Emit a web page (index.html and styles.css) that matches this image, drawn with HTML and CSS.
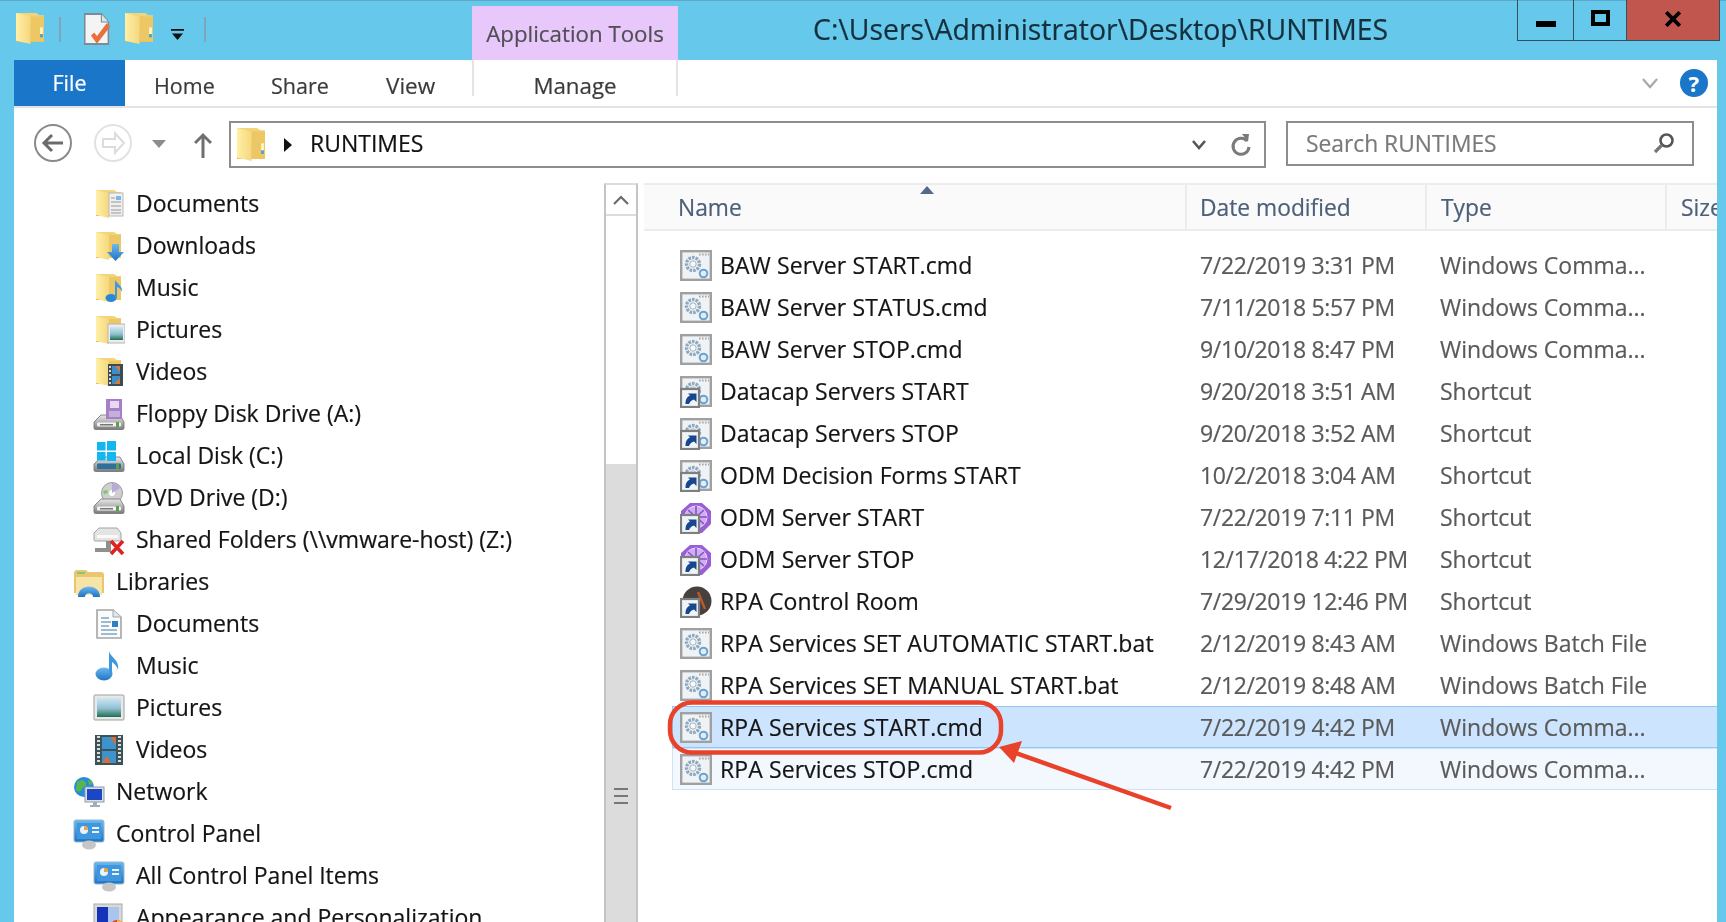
FILE: index.html
```html
<!DOCTYPE html>
<html lang="en">
<head>
<meta charset="utf-8">
<title>RUNTIMES</title>
<link rel="stylesheet" href="styles.css">
</head>
<body>
<svg class="defs" width="0" height="0" aria-hidden="true">
  <defs>
    <linearGradient id="gFolderFront" x1="0" y1="0" x2="1" y2="0"><stop offset="0" stop-color="#fff0a6"/><stop offset="1" stop-color="#f5d77e"/></linearGradient>
    <linearGradient id="gFolderBack" x1="0" y1="0" x2="0" y2="1"><stop offset="0" stop-color="#f6d57a"/><stop offset="1" stop-color="#e0b04e"/></linearGradient>
    <linearGradient id="gDrive" x1="0" y1="0" x2="0" y2="1"><stop offset="0" stop-color="#e8e8e8"/><stop offset="1" stop-color="#7b7b7b"/></linearGradient>
    <linearGradient id="gBlue" x1="0" y1="0" x2="0" y2="1"><stop offset="0" stop-color="#6cb8ee"/><stop offset="1" stop-color="#1f74c4"/></linearGradient>
    <linearGradient id="gScene" x1="0" y1="0" x2="0" y2="1"><stop offset="0" stop-color="#cfe6f4"/><stop offset=".55" stop-color="#8fc0d0"/><stop offset="1" stop-color="#1f6f50"/></linearGradient>

    <symbol id="folder" viewBox="0 0 32 32">
      <path d="M3 2h18l3 2h4v24H3z" fill="url(#gFolderBack)"/>
      <path d="M16 5h12v23H16z" fill="#eec765"/>
      <path d="M3 2l13 3v25L3 27z" fill="url(#gFolderFront)"/>
    </symbol>
    <symbol id="folderQat" viewBox="3 2 25 28" preserveAspectRatio="none">
      <path d="M3 2h18l3 2h4v24H3z" fill="url(#gFolderBack)"/>
      <path d="M16 5h12v23H16z" fill="#eec765"/>
      <path d="M3 2l13 3v25L3 27z" fill="url(#gFolderFront)"/>
      <rect x="24.500" y="15" width="2.500" height="6" fill="#fff6d0"/>
      <rect x="24.500" y="21" width="2.500" height="3" fill="#4aa3c8"/>
    </symbol>
    <symbol id="propdoc" viewBox="0 0 32 32" preserveAspectRatio="none">
      <path d="M2 1h19l8 8v22H2z" fill="#f4f4f4" stroke="#7d8b96" stroke-width="1.800"/>
      <path d="M21 1v8h8" fill="#dfe3e6" stroke="#7d8b96" stroke-width="1.200"/>
      <path d="M11 21l5 6 13-15" fill="none" stroke="#e8703c" stroke-width="5"/>
    </symbol>
    <symbol id="fDocs" viewBox="0 0 32 32">
      <use href="#folder"/>
      <rect x="16" y="5" width="14" height="23" fill="#efefef" stroke="#b9b9b9"/>
      <path d="M18 10h4M18 14h10M18 18h10M18 22h10M18 25h10" stroke="#9a9a9a" stroke-width="1.200"/>
      <rect x="23" y="8" width="5" height="4" fill="#7cb6e6"/>
    </symbol>
    <symbol id="fDown" viewBox="0 0 32 32">
      <use href="#folder"/>
      <path d="M19 14h7v8h5l-8.500 9-8.500-9h5z" fill="url(#gBlue)"/>
    </symbol>
    <symbol id="fMusic" viewBox="0 0 32 32">
      <use href="#folder"/>
      <ellipse cx="18" cy="26" rx="5.500" ry="4" fill="#2a86d6"/>
      <path d="M22 26V7c0 4 8 6 7 13-1-4-5-5-5-5v11z" fill="#3d98e0"/>
    </symbol>
    <symbol id="fPics" viewBox="0 0 32 32">
      <use href="#folder"/>
      <rect x="15" y="10" width="17" height="19" fill="#ececec" stroke="#b5b5b5"/>
      <rect x="17" y="13" width="13" height="13" fill="url(#gScene)"/>
    </symbol>
    <symbol id="fVids" viewBox="0 0 32 32">
      <use href="#folder"/>
      <rect x="15" y="8" width="15" height="22" fill="#3a4d55"/>
      <rect x="19" y="10" width="8" height="8" fill="#3c8fc6"/>
      <rect x="19" y="20" width="8" height="8" fill="#3c8fc6"/>
      <path d="M22 10l5 6v-6zM21 28l6-6v6z" fill="#d87a3a"/>
      <path d="M17 10v18" stroke="#d8d8d8" stroke-width="2" stroke-dasharray="2 2"/>
    </symbol>
    <symbol id="drive" viewBox="0 0 32 32">
      <path d="M1 24l7-7h19l4 7v6a1.500 1.500 0 0 1-1.500 1.500h-27A1.500 1.500 0 0 1 1 30z" fill="url(#gDrive)" stroke="#6e6e6e" stroke-width=".8"/>
      <rect x="4" y="24.500" width="24" height="4" rx="1" fill="#f2f2f2"/>
      <rect x="7" y="26" width="13" height="1.500" fill="#777"/>
      <rect x="23" y="24" width="3" height="5" fill="#5ca04a"/>
    </symbol>
    <symbol id="dFloppy" viewBox="0 0 32 32">
      <use href="#drive"/>
      <path d="M13 1h16v20H13z" fill="#a77fc9"/>
      <rect x="17" y="3" width="9" height="7" fill="#e6d9f1"/>
      <rect x="16" y="13" width="11" height="6" fill="#c6b0da"/>
    </symbol>
    <symbol id="dLocal" viewBox="0 0 32 32">
      <path d="M1 24l7-7h19l4 7v6a1.500 1.500 0 0 1-1.500 1.500h-27A1.500 1.500 0 0 1 1 30z" fill="url(#gDrive)" stroke="#6e6e6e" stroke-width=".8"/>
      <rect x="4" y="23.500" width="24" height="5.500" rx="1" fill="#2e6f9c"/>
      <rect x="23" y="24" width="3" height="5" fill="#5ca04a"/>
      <path d="M4 2h8.500v8.500H4zM14 1h9v9.500h-9zM4 12h8.500v8.500H4zM14 12h9v9h-9z" fill="#12b7f0"/>
    </symbol>
    <symbol id="dDvd" viewBox="0 0 32 32">
      <circle cx="19" cy="11" r="10.500" fill="#cfcfcf" stroke="#9c9c9c"/>
      <circle cx="19" cy="11" r="3" fill="#fff"/>
      <path d="M19 1a10 10 0 0 1 8 5l-8 5z" fill="#b8a9d9"/>
      <path d="M10 9l4-1 1 3-4 1z" fill="#7bc96c"/>
      <use href="#drive"/>
    </symbol>
    <symbol id="dShared" viewBox="0 0 32 32">
      <path d="M1 9l5-5h18l4 5v7a1 1 0 0 1-1 1H2a1 1 0 0 1-1-1z" fill="#e4e4e4" stroke="#a3a3a3"/>
      <rect x="4" y="11" width="21" height="3" fill="#fafafa"/>
      <path d="M13 17v7H2v4h16v-11z" fill="#8f8f8f"/>
      <path d="M18 17l12 13M30 17L18 30" stroke="#dd2222" stroke-width="3.600"/>
    </symbol>
    <symbol id="lib" viewBox="0 0 32 32">
      <path d="M1 7a3 3 0 0 1 3-3h9l2 2h13a3 3 0 0 1 3 3v18H1z" fill="#e9c66f"/>
      <path d="M4 6h8v2H4z" fill="#7dc97a"/>
      <path d="M3 11h26v18H3z" fill="#f7e5a7"/>
      <path d="M5 31c0-14 22-14 22 0h-7c0-5-8-5-8 0z" fill="url(#gBlue)"/>
    </symbol>
    <symbol id="doc" viewBox="0 0 32 32">
      <path d="M4 2h16l8 7v21H4z" fill="#fbfbfb" stroke="#a5a5a5" stroke-width="1.600"/>
      <path d="M20 2v7h8" fill="#dde8f1" stroke="#a5a5a5"/>
      <path d="M8 10h8M8 14h10M8 18h8M8 22h16M8 26h16" stroke="#7ba7c4" stroke-width="1.400"/>
      <rect x="19" y="13" width="6" height="6" fill="#2f7fc4"/>
    </symbol>
    <symbol id="note" viewBox="0 0 32 32">
      <ellipse cx="11" cy="24" rx="8.500" ry="6.500" fill="url(#gBlue)"/>
      <path d="M16 24V1c1 6 11 9 9 19-1-5-6-8-6-8v12z" fill="#3d98e0"/>
    </symbol>
    <symbol id="pic" viewBox="0 0 32 32">
      <rect x="1" y="3" width="30" height="25" rx="1" fill="#e8e8e8" stroke="#9f9f9f"/>
      <rect x="4" y="6" width="24" height="19" fill="url(#gScene)"/>
    </symbol>
    <symbol id="film" viewBox="0 0 32 32">
      <rect x="2" y="1" width="28" height="30" fill="#3b5258"/>
      <rect x="9" y="3" width="14" height="12" fill="#3f93cc"/>
      <rect x="9" y="17" width="14" height="12" fill="#3f93cc"/>
      <path d="M17 3l6 8V3zM9 29l5-7 4 7z" fill="#d2703a"/>
      <path d="M5.500 2v28M26.500 2v28" stroke="#dcdcdc" stroke-width="3" stroke-dasharray="2 2"/>
    </symbol>
    <symbol id="net" viewBox="0 0 32 32">
      <circle cx="11" cy="11" r="10" fill="#2a8bd8"/>
      <path d="M4 6c4-3 8-2 9 1s-3 3-4 6-4 3-6 1z" fill="#55b84a"/>
      <path d="M15 4c3 0 5 2 5 4l-4 1z" fill="#55b84a"/>
      <rect x="12" y="11" width="19" height="15" fill="#d7e0e8" stroke="#8d9aa4"/>
      <rect x="14" y="13" width="15" height="11" fill="#1c46c4"/>
      <path d="M20 26h4v3h3v2H17v-2h3z" fill="#a3adb6"/>
    </symbol>
    <symbol id="cp" viewBox="0 0 32 32">
      <rect x="1" y="2" width="30" height="22" rx="2" fill="url(#gBlue)" stroke="#9ab7cf"/>
      <rect x="4" y="5" width="24" height="16" fill="#3f97dd"/>
      <circle cx="11" cy="12" r="4" fill="#e9f3fb"/>
      <path d="M11 12V8a4 4 0 0 1 4 4z" fill="#f0a23c"/>
      <path d="M19 10h7M19 14h7" stroke="#e9f3fb" stroke-width="2"/>
      <ellipse cx="16" cy="27" rx="7" ry="4.500" fill="#c6c6c6"/>
    </symbol>
    <symbol id="appearance" viewBox="0 0 32 32">
      <rect x="1" y="2" width="28" height="24" fill="#d9d9d9" stroke="#aaa"/>
      <rect x="4" y="5" width="11" height="18" fill="#1433b8"/>
      <rect x="15" y="5" width="11" height="18" fill="#a9c5ee"/>
      <circle cx="24" cy="25" r="7" fill="#e33b2e"/>
      <path d="M24 25V18a7 7 0 0 1 7 7z" fill="#f3c230"/>
      <path d="M24 25h7a7 7 0 0 1-7 7z" fill="#3cb34a"/>
      <path d="M24 25v7a7 7 0 0 1-7-3z" fill="#2f62d0"/>
    </symbol>
    <symbol id="scriptBase" viewBox="0 0 32 32">
      <rect x="1.200" y="1.200" width="29.600" height="28.600" fill="#f0f3f5" stroke="#a0a0a0" stroke-width="2.400"/>
      <path d="M19 4.500h10" stroke="#a8a8a8" stroke-width="2" stroke-dasharray="1.600 1.400"/>
      <circle cx="13" cy="14" r="6.500" fill="none" stroke="#8fa9bf" stroke-width="3.400" stroke-dasharray="2.600 1"/>
      <circle cx="13" cy="14" r="3.200" fill="#f6f8fa" stroke="#a3b3c0"/>
      <circle cx="23.500" cy="23.500" r="3.800" fill="#e2ecf4" stroke="#6aa3d2" stroke-width="2"/>
    </symbol>
    <symbol id="cmd" viewBox="0 0 32 32">
      <use href="#scriptBase"/>
    </symbol>
    <symbol id="arrowBox" viewBox="0 0 32 32">
      <rect x="1" y="13" width="18" height="18" fill="#f0f4f8" stroke="#7f7f7f" stroke-width="2.200"/>
      <path d="M5.500 28c0-5 1.500-7 4.500-8.500L8 17.500h8.500V26l-2.500-2.500c-3 1-4 2-5 4.500z" fill="#17488f"/>
    </symbol>
    <symbol id="lnkScript" viewBox="0 0 32 32">
      <use href="#scriptBase"/>
      <use href="#arrowBox"/>
    </symbol>
    <symbol id="lnkOdm" viewBox="0 0 32 32">
      <path d="M10 1h12l9 8v13l-9 9H10l-9-9V9z" fill="#9a5fd6"/>
      <circle cx="16" cy="15" r="11" fill="#cdaef0" stroke="#e9dcf8" stroke-width="1"/>
      <path d="M5 15h22M16 4v22M8 8l16 14M24 8L8 22" stroke="#8a4fc8" stroke-width="1.600"/>
      <use href="#arrowBox"/>
    </symbol>
    <symbol id="lnkRpa" viewBox="0 0 32 32">
      <circle cx="17" cy="15" r="14.500" fill="#46413f"/>
      <path d="M18 6l7 17" stroke="#b65a2c" stroke-width="2.500"/>
      <use href="#arrowBox"/>
    </symbol>
  </defs>
</svg>

<div class="screen">
  <header class="titlebar">
    <div class="qat">
      <svg class="qat-folder"><use href="#folderQat"/></svg>
      <span class="qat-sep"></span>
      <svg class="qat-doc"><use href="#propdoc"/></svg>
      <svg class="qat-folder2"><use href="#folderQat"/></svg>
      <svg class="qat-drop" viewBox="0 0 16 14"><path d="M1 1h14v2H1zM2 6h12l-6 7z" fill="#111"/></svg>
      <span class="qat-sep qat-sep-last"></span>
    </div>
    <div class="context-tab">Application Tools</div>
    <div class="title">C:\Users\Administrator\Desktop\RUNTIMES</div>
    <div class="controls">
      <div class="ctl ctl-min"><span class="glyph-min"></span></div>
      <div class="ctl ctl-max"><span class="glyph-max"></span></div>
      <div class="ctl ctl-close"><svg class="glyph-x" viewBox="0 0 16 14"><path d="M2 1l12 12M14 1L2 13" stroke="#000" stroke-width="3.400"/></svg></div>
    </div>
  </header>

  <main class="window">
    <div class="ribbon">
      <div class="tab tab-file">File</div>
      <div class="tab tab-home">Home</div>
      <div class="tab tab-share">Share</div>
      <div class="tab tab-view">View</div>
      <div class="tab tab-manage">Manage</div>
      <div class="ribbon-end">
        <svg class="ribbon-chev" viewBox="0 0 18 12"><path d="M1 1l8 9 8-9" fill="none" stroke="#a8a8a8" stroke-width="2.400"/></svg>
        <div class="help">?</div>
      </div>
    </div>

    <div class="addressrow">
      <svg class="nav-btn" viewBox="0 0 40 40"><circle cx="20" cy="20" r="18" fill="#fff" stroke="#8a8a8a" stroke-width="2"/><path d="M30 20H11M19 12l-8 8 8 8" fill="none" stroke="#6b6b6b" stroke-width="3"/></svg>
      <svg class="nav-btn nav-fwd" viewBox="0 0 40 40"><circle cx="20" cy="20" r="18" fill="#fff" stroke="#e2e2e2" stroke-width="2"/><path d="M10 16h12v-6l9 10-9 10v-6H10z" fill="none" stroke="#dcdcdc" stroke-width="2"/></svg>
      <svg class="nav-drop" viewBox="0 0 14 8"><path d="M0 0h14l-7 8z" fill="#8c8c8c"/></svg>
      <svg class="nav-up" viewBox="0 0 18 26"><path d="M9 26V3M1 11l8-8 8 8" fill="none" stroke="#6f6f6f" stroke-width="3"/></svg>
      <div class="address">
        <svg class="addr-folder"><use href="#folderQat"/></svg>
        <svg class="addr-caret" viewBox="0 0 8 14"><path d="M0 0l8 7-8 7z" fill="#111"/></svg>
        <span class="addr-text">RUNTIMES</span>
        <svg class="addr-chev" viewBox="0 0 14 10"><path d="M1 1l6 7 6-7" fill="none" stroke="#555" stroke-width="2.600"/></svg>
        <svg class="addr-refresh" viewBox="0 0 22 24"><path d="M17 8a8 8 0 1 0 2 6" fill="none" stroke="#7a7a7a" stroke-width="3"/><path d="M12 1l7 0-1 8z" fill="#7a7a7a"/></svg>
      </div>
      <div class="search">
        <span class="search-text">Search RUNTIMES</span>
        <svg class="search-icon" viewBox="0 0 22 22"><circle cx="13.500" cy="8.500" r="6" fill="none" stroke="#555" stroke-width="2.600"/><path d="M9 13l-7 7" stroke="#777" stroke-width="3.200"/></svg>
      </div>
    </div>

    <div class="panes">
      <nav class="tree">
        <div class="node"><svg class="ico"><use href="#fDocs"/></svg>Documents</div>
        <div class="node"><svg class="ico"><use href="#fDown"/></svg>Downloads</div>
        <div class="node"><svg class="ico"><use href="#fMusic"/></svg>Music</div>
        <div class="node"><svg class="ico"><use href="#fPics"/></svg>Pictures</div>
        <div class="node"><svg class="ico"><use href="#fVids"/></svg>Videos</div>
        <div class="node"><svg class="ico"><use href="#dFloppy"/></svg>Floppy Disk Drive (A:)</div>
        <div class="node"><svg class="ico"><use href="#dLocal"/></svg>Local Disk (C:)</div>
        <div class="node"><svg class="ico"><use href="#dDvd"/></svg>DVD Drive (D:)</div>
        <div class="node"><svg class="ico"><use href="#dShared"/></svg>Shared Folders (\\vmware-host) (Z:)</div>
        <div class="node node-top"><svg class="ico"><use href="#lib"/></svg>Libraries</div>
        <div class="node"><svg class="ico"><use href="#doc"/></svg>Documents</div>
        <div class="node"><svg class="ico"><use href="#note"/></svg>Music</div>
        <div class="node"><svg class="ico"><use href="#pic"/></svg>Pictures</div>
        <div class="node"><svg class="ico"><use href="#film"/></svg>Videos</div>
        <div class="node node-top"><svg class="ico"><use href="#net"/></svg>Network</div>
        <div class="node node-top"><svg class="ico"><use href="#cp"/></svg>Control Panel</div>
        <div class="node"><svg class="ico"><use href="#cp"/></svg>All Control Panel Items</div>
        <div class="node"><svg class="ico"><use href="#appearance"/></svg>Appearance and Personalization</div>
      </nav>

      <div class="scrollbar">
        <div class="sb-up"><svg class="sb-chev" viewBox="0 0 16 10"><path d="M1 9l7-7 7 7" fill="none" stroke="#6b6b6b" stroke-width="2.200"/></svg></div>
        <div class="sb-track"></div>
        <div class="sb-thumb"><span class="sb-grip"></span></div>
      </div>

      <section class="list">
        <div class="list-head">
          <span class="col col-name">Name<svg class="sort" viewBox="0 0 14 8"><path d="M7 0l7 8H0z" fill="#56698a"/></svg></span>
          <span class="col col-date">Date modified</span>
          <span class="col col-type">Type</span>
          <span class="col col-size">Size</span>
        </div>
        <div class="rows">
          <div class="row"><svg class="ico"><use href="#cmd"/></svg><span class="name">BAW Server START.cmd</span><span class="date">7/22/2019 3:31 PM</span><span class="type">Windows Comma...</span></div>
          <div class="row"><svg class="ico"><use href="#cmd"/></svg><span class="name">BAW Server STATUS.cmd</span><span class="date">7/11/2018 5:57 PM</span><span class="type">Windows Comma...</span></div>
          <div class="row"><svg class="ico"><use href="#cmd"/></svg><span class="name">BAW Server STOP.cmd</span><span class="date">9/10/2018 8:47 PM</span><span class="type">Windows Comma...</span></div>
          <div class="row"><svg class="ico"><use href="#lnkScript"/></svg><span class="name">Datacap Servers START</span><span class="date">9/20/2018 3:51 AM</span><span class="type">Shortcut</span></div>
          <div class="row"><svg class="ico"><use href="#lnkScript"/></svg><span class="name">Datacap Servers STOP</span><span class="date">9/20/2018 3:52 AM</span><span class="type">Shortcut</span></div>
          <div class="row"><svg class="ico"><use href="#lnkScript"/></svg><span class="name">ODM Decision Forms START</span><span class="date">10/2/2018 3:04 AM</span><span class="type">Shortcut</span></div>
          <div class="row"><svg class="ico"><use href="#lnkOdm"/></svg><span class="name">ODM Server START</span><span class="date">7/22/2019 7:11 PM</span><span class="type">Shortcut</span></div>
          <div class="row"><svg class="ico"><use href="#lnkOdm"/></svg><span class="name">ODM Server STOP</span><span class="date">12/17/2018 4:22 PM</span><span class="type">Shortcut</span></div>
          <div class="row"><svg class="ico"><use href="#lnkRpa"/></svg><span class="name">RPA Control Room</span><span class="date">7/29/2019 12:46 PM</span><span class="type">Shortcut</span></div>
          <div class="row"><svg class="ico"><use href="#cmd"/></svg><span class="name">RPA Services SET AUTOMATIC START.bat</span><span class="date">2/12/2019 8:43 AM</span><span class="type">Windows Batch File</span></div>
          <div class="row"><svg class="ico"><use href="#cmd"/></svg><span class="name">RPA Services SET MANUAL START.bat</span><span class="date">2/12/2019 8:48 AM</span><span class="type">Windows Batch File</span></div>
          <div class="row row-selected"><svg class="ico"><use href="#cmd"/></svg><span class="name">RPA Services START.cmd</span><span class="date">7/22/2019 4:42 PM</span><span class="type">Windows Comma...</span></div>
          <div class="row row-hover"><svg class="ico"><use href="#cmd"/></svg><span class="name">RPA Services STOP.cmd</span><span class="date">7/22/2019 4:42 PM</span><span class="type">Windows Comma...</span></div>
        </div>
      </section>
    </div>
  </main>

  <svg class="annotation" viewBox="0 0 1726 922">
    <rect x="670" y="702.500" width="331" height="50" rx="22" fill="none" stroke="#e8432a" stroke-width="4.500"/>
    <path d="M1171 808L1010 751" stroke="#e8432a" stroke-width="4.500"/>
    <path d="M999 747l23-6-8 22z" fill="#e8432a"/>
  </svg>
</div>
</body>
</html>
```
FILE: styles.css
```css
* { box-sizing: border-box; }

html, body {
  margin: 0;
  height: 100%;
  overflow: hidden;
}

body {
  font-family: "Open Sans", "Noto Sans", sans-serif;
  font-size: 23px;
  color: #141414;
  background: #66c9ec;
  -webkit-text-stroke: 0.2px;
}

.defs { position: absolute; }

.screen {
  position: relative;
  width: 1726px;
  height: 922px;
  display: flex;
  flex-direction: column;
  background: #66c9ec;
  filter: blur(0.55px);
  overflow: hidden;
}

/* Title bar */
.titlebar {
  display: flex;
  height: 60px;
  flex: none;
  border-top: 1px solid #5aa7c6;
}

.qat {
  width: 472px;
  flex: none;
  display: flex;
  align-items: flex-start;
  padding-left: 16px;
  padding-top: 12px;
}

.qat-folder { width: 28px; height: 31px; }
.qat-doc { width: 28px; height: 32px; margin-left: 22px; flex: none; }
.qat-folder2 { width: 28px; height: 31px; margin-left: 14px; }
.qat-drop { width: 15px; height: 13px; margin-left: 17px; margin-top: 15px; }

.qat-sep {
  width: 2px;
  height: 25px;
  margin-left: 15px;
  margin-top: 4px;
  background: #7ea6b8;
}
.qat-sep-last { margin-left: 19px; }

.context-tab {
  width: 206px;
  flex: none;
  margin-top: 5px;
  background: #e8c8fa;
  color: #4f4f55;
  font-size: 22.3px;
  text-align: center;
  padding-top: 12px;
  white-space: nowrap;
}

.title {
  flex: 1;
  margin-left: 135px;
  padding-top: 9px;
  font-size: 28.400px;
  color: #15303d;
  white-space: nowrap;
}

.controls {
  display: flex;
  align-items: flex-start;
  flex: none;
  margin-right: 6px;
  margin-top: -1px;
}

.ctl {
  height: 41px;
  display: flex;
  align-items: center;
  justify-content: center;
  border: 1px solid #32505e;
  border-top: 0;
}

.ctl-min { width: 57px; padding-top: 8px; }
.ctl-max { width: 53px; border-left: 0; padding-bottom: 4px; }
.ctl-close { width: 93px; border-left: 0; background: #c0564d; padding-bottom: 2px; }

.glyph-min { width: 20px; height: 6px; background: #000; }
.glyph-max { width: 19px; height: 16px; border: 4px solid #000; }
.glyph-x { width: 18px; height: 16px; }

/* Window */
.window {
  flex: 1;
  margin: 0 9px 0 14px;
  background: #fff;
  display: flex;
  flex-direction: column;
  min-height: 0;
}

.ribbon {
  height: 48px;
  flex: none;
  display: flex;
  border-bottom: 2px solid #e4e4e4;
  color: #3b3b3b;
  font-size: 21.5px;
}

.tab {
  display: flex;
  align-items: center;
  white-space: nowrap;
  padding-top: 4px;
  flex: none;
}

.tab-file {
  width: 111px;
  justify-content: center;
  background: #1a76c9;
  color: #fff;
  padding-top: 0;
  padding-bottom: 1px;
}

.tab-home { width: 117px; margin-left: 29px; }
.tab-share { width: 115px; }
.tab-view { width: 86px; font-size: 22.5px; }

.tab-manage {
  width: 206px;
  height: 36px;
  padding-top: 15px;
  justify-content: center;
  font-size: 22.3px;
  border-left: 2px solid #e4e4e4;
  border-right: 2px solid #e4e4e4;
}

.ribbon-end {
  margin-left: auto;
  display: flex;
  align-items: center;
  padding-right: 9px;
}

.ribbon-chev { width: 16px; height: 11px; margin-right: 22px; }

.help {
  width: 28px;
  height: 28px;
  border-radius: 50%;
  background: #1a76c9;
  color: #fff;
  font-weight: 700;
  font-size: 22px;
  line-height: 28px;
  text-align: center;
}

.addressrow {
  height: 75px;
  flex: none;
  display: flex;
  align-items: flex-start;
  padding-top: 13px;
  padding-left: 19px;
}

.nav-btn { width: 40px; height: 40px; flex: none; margin-top: 2px; }
.nav-fwd { margin-left: 20px; }
.nav-drop { width: 14px; height: 8px; margin-left: 19px; margin-top: 19px; flex: none; }
.nav-up { width: 18px; height: 26px; margin-left: 28px; margin-top: 11px; flex: none; }

.address {
  width: 1037px;
  height: 47px;
  margin-left: 17px;
  flex: none;
  display: flex;
  align-items: center;
  border: 2px solid #8d8d8d;
  padding: 0 12px 3px 6px;
}

.addr-folder { width: 28px; height: 33px; flex: none; margin-top: 3px; }
.addr-caret { width: 8px; height: 14px; margin-left: 19px; margin-top: 3px; flex: none; }
.addr-text { margin-left: 18px; color: #111; }
.addr-chev { width: 14px; height: 10px; margin-left: auto; margin-top: 3px; flex: none; }
.addr-refresh { width: 22px; height: 24px; margin-left: 24px; margin-top: 3px; flex: none; }

.search {
  width: 408px;
  height: 45px;
  margin-left: 20px;
  flex: none;
  display: flex;
  align-items: center;
  justify-content: space-between;
  border: 2px solid #8d8d8d;
  padding: 0 17px 1px 18px;
  color: #7a7a7a;
  font-size: 22.8px;
}

.search-icon { width: 22px; height: 22px; }

/* Panes */
.panes {
  flex: 1;
  display: flex;
  min-height: 0;
}

.tree {
  width: 590px;
  flex: none;
  overflow: hidden;
}

.node {
  height: 42px;
  display: flex;
  align-items: center;
  gap: 11px;
  padding-left: 79px;
  padding-bottom: 2px;
  white-space: nowrap;
  line-height: 38px;
}

.node .ico { margin-top: 1px; }

.node-top { padding-left: 59px; }

.ico { width: 32px; height: 32px; flex: none; margin-top: 2px; }

.scrollbar {
  width: 34px;
  flex: none;
  display: flex;
  flex-direction: column;
  border-left: 2px solid #c4c4c4;
  border-right: 2px solid #c4c4c4;
  border-top: 2px solid #dcdcdc;
}

.sb-up {
  height: 31px;
  flex: none;
  display: flex;
  align-items: center;
  justify-content: center;
  border-bottom: 2px solid #dcdcdc;
}

.sb-chev { width: 16px; height: 10px; }
.sb-track { height: 248px; flex: none; }

.sb-thumb {
  flex: 1;
  background: #dcdcdc;
  display: flex;
  justify-content: center;
  padding-top: 324px;
}

.sb-grip {
  width: 14px;
  height: 16px;
  border-top: 2px solid #777;
  border-bottom: 2px solid #777;
  background: linear-gradient(#777, #777) center / 100% 2px no-repeat;
}

.list {
  flex: 1;
  min-width: 0;
  margin-left: 6px;
  overflow: hidden;
}

.list-head {
  height: 48px;
  display: flex;
  background: #fafafa;
  border-top: 2px solid #ececec;
  border-bottom: 2px solid #ececec;
  color: #4d6079;
  font-size: 22.8px;
  white-space: nowrap;
}

.col {
  display: flex;
  align-items: center;
  flex: none;
  height: 100%;
  border-right: 2px solid #ececec;
}

.col-name { position: relative; width: 543px; padding-left: 34px; }
.col-date { width: 240px; padding-left: 13px; }
.col-type { width: 240px; padding-left: 14px; }
.col-size { border-right: 0; padding-left: 14px; }

.sort {
  position: absolute;
  left: 276px;
  top: 1px;
  width: 14px;
  height: 8px;
}

.rows {
  margin-top: 13px;
  margin-left: 28px;
}

.row {
  height: 42px;
  display: flex;
  align-items: center;
  padding-left: 8px;
  white-space: nowrap;
  border: 1px solid transparent;
  border-right: 0;
  line-height: 38px;
}

.row .ico { margin-left: -1px; }
.name { width: 480px; flex: none; margin-left: 8px; letter-spacing: 0.1px; }
.date { width: 240px; flex: none; color: #5a5a5a; letter-spacing: -0.35px; }
.type { flex: none; color: #5a5a5a; }

.row-selected { background: #cce4fd; border-color: #98c6f4; }
.row-hover { background: #f2f8fe; border-color: #cde3fa; }

.annotation {
  position: absolute;
  left: 0;
  top: 0;
  width: 1726px;
  height: 922px;
  pointer-events: none;
}
```
